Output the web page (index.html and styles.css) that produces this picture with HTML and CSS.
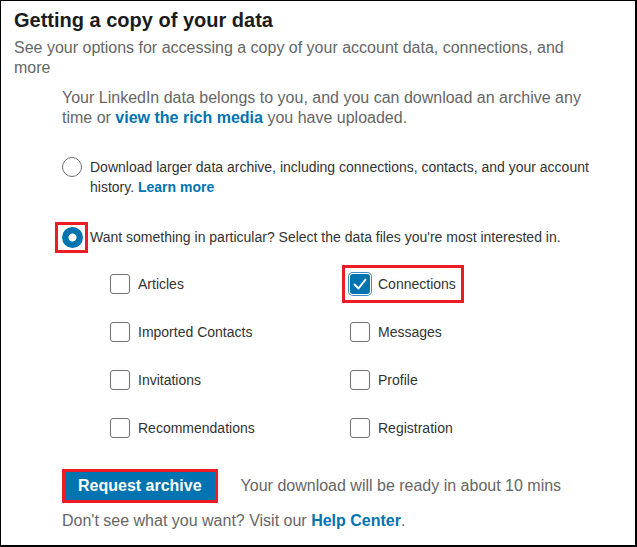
FILE: index.html
```html
<!DOCTYPE html>
<html lang="en">
<head>
<meta charset="utf-8">
<title>Getting a copy of your data</title>
<link rel="stylesheet" href="styles.css">
</head>
<body>
<div class="card">
  <h1 class="title">Getting a copy of your data</h1>
  <p class="subtitle">See your options for accessing a copy of your account data, connections, and more</p>
  <div class="content">
    <p class="intro">Your LinkedIn data belongs to you, and you can download an archive any time or <a class="link" href="#">view the rich media</a> you have uploaded.</p>

    <div class="option option-first">
      <span class="radio"></span>
      <span class="option-text">Download larger data archive, including connections, contacts, and your account history. <a class="link" href="#">Learn more</a></span>
    </div>

    <div class="option option-second">
      <span class="radio-wrap"><span class="radio radio-on"></span><span class="mark mark-radio"></span></span>
      <span class="option-text">Want something in particular? Select the data files you're most interested in.</span>
    </div>

    <div class="files">
      <div class="file"><span class="box"></span><span class="file-label">Articles</span></div>
      <div class="file file-checked"><span class="box box-on"><svg viewBox="0 0 20 20" width="20" height="20"><polyline points="4.5,10.5 8.5,14.5 15.5,5.5" fill="none" stroke="#fff" stroke-width="2" stroke-linecap="round" stroke-linejoin="round"/></svg></span><span class="file-label">Connections</span><span class="mark mark-check"></span></div>
      <div class="file"><span class="box"></span><span class="file-label">Imported Contacts</span></div>
      <div class="file"><span class="box"></span><span class="file-label">Messages</span></div>
      <div class="file"><span class="box"></span><span class="file-label">Invitations</span></div>
      <div class="file"><span class="box"></span><span class="file-label">Profile</span></div>
      <div class="file"><span class="box"></span><span class="file-label">Recommendations</span></div>
      <div class="file"><span class="box"></span><span class="file-label">Registration</span></div>
    </div>

    <div class="actions">
      <button class="btn" type="button">Request archive</button>
      <span class="ready">Your download will be ready in about 10 mins</span>
    </div>

    <p class="help">Don't see what you want? Visit our <a class="link" href="#">Help Center</a>.</p>
  </div>
</div>
</body>
</html>
```

FILE: styles.css
```css
* { box-sizing: border-box; }

html, body {
  margin: 0;
  padding: 0;
  background: #fff;
}

body {
  font-family: "Liberation Sans", Arial, sans-serif;
}

.card {
  width: 637px;
  height: 547px;
  border: 1px solid #000;
  border-right-width: 2px;
  border-bottom-width: 2px;
  padding: 7px 35px 0 13px;
  background: #fff;
}

.title {
  margin: 0;
  font-size: 20px;
  line-height: 24px;
  font-weight: bold;
  color: #1b1b1b;
}

.subtitle {
  margin: 6px 0 0;
  font-size: 16px;
  line-height: 20px;
  color: #666;
}

.content {
  padding-left: 48px;
}

.intro {
  margin: 10px 0 0;
  font-size: 16px;
  line-height: 20px;
  color: #666;
}

.link {
  color: #0073b1;
  font-weight: bold;
  text-decoration: none;
}

.option {
  display: flex;
  align-items: flex-start;
  gap: 8px;
  font-size: 14px;
  line-height: 20px;
  color: #333;
}

.option-first { margin-top: 29px; }
.option-second { margin-top: 30px; }

.option-text { flex: 1; }

.radio {
  flex: none;
  width: 20px;
  height: 20px;
  border-radius: 50%;
  border: 1.5px solid #707070;
  background: #fff;
}

.radio-wrap {
  position: relative;
  flex: none;
  display: flex;
}

.radio-on {
  border: none;
  background: radial-gradient(circle, #fff 0 3.6px, #0073b1 4.4px);
  width: 21px;
  height: 21px;
  margin-right: -1px;
}

.mark {
  position: absolute;
  border: 3px solid #ed1c24;
  pointer-events: none;
}

.mark-radio {
  left: -7px;
  right: -6px;
  top: -5px;
  bottom: -5px;
}

.files {
  margin: 26px 0 0 48px;
  display: grid;
  grid-template-columns: 240px 200px;
  row-gap: 28px;
}

.file {
  position: relative;
  display: flex;
  align-items: center;
  gap: 8px;
  height: 20px;
  font-size: 14px;
  color: #333;
  width: max-content;
}

.box {
  flex: none;
  width: 20px;
  height: 20px;
  border: 1px solid #6f6f6f;
  border-radius: 3px;
  background: #fff;
}

.box-on {
  border: none;
  background: #0073b1;
  box-shadow: 0 0 0 1px #fff, 0 0 0 2px #3d8fc4;
  display: flex;
}

.mark-check {
  left: -8px;
  right: -8px;
  top: -9px;
  bottom: -9px;
}

.actions {
  margin-top: 31px;
  display: flex;
  align-items: center;
  gap: 23px;
}

.btn {
  height: 34px;
  padding: 0 13px;
  border: 3px solid #ed1c24;
  background: #0073b1;
  color: #fff;
  font-family: "Liberation Sans", Arial, sans-serif;
  font-size: 16px;
  font-weight: bold;
  line-height: 28px;
  cursor: pointer;
}

.ready {
  font-size: 16px;
  color: #666;
}

.help {
  margin: 8px 0 0;
  font-size: 16px;
  line-height: 20px;
  color: #666;
}
```
